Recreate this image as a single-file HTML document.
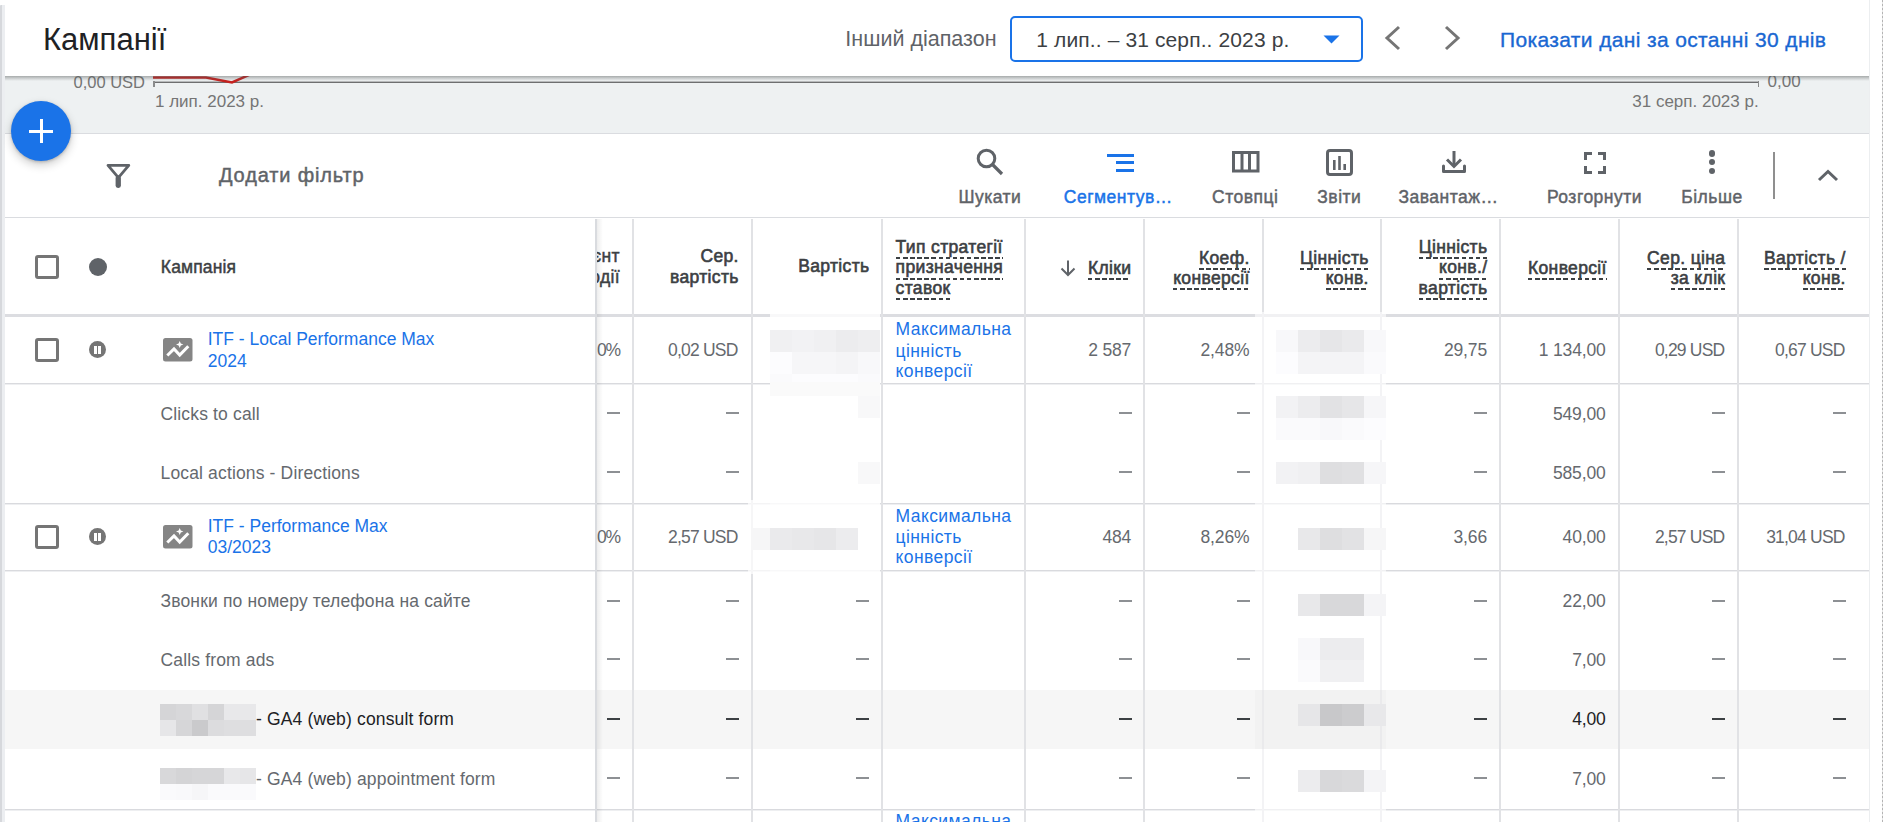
<!DOCTYPE html>
<html><head><meta charset="utf-8"><style>
html,body{margin:0;padding:0;}
body{width:1883px;height:822px;overflow:hidden;position:relative;background:#fff;font-family:"Liberation Sans",sans-serif;}
.t{position:absolute;white-space:nowrap;}
</style></head><body>
<div style="position:absolute;left:0px;top:5px;width:2px;height:817px;background:#d6d8dc;border-radius:1px 0 0 0"></div>
<div style="position:absolute;left:2px;top:5px;width:3px;height:817px;background:#eceef1"></div>
<div style="position:absolute;left:1869px;top:0px;width:1px;height:822px;background:#eceef0"></div>
<div style="position:absolute;left:1882px;top:0px;width:1px;height:822px;background:repeating-linear-gradient(#b4b4b4 0 2px,#e4e4e4 2px 4px)"></div>
<div style="position:absolute;left:5px;top:76px;width:1864px;height:57px;background:#eef1f2"></div>
<div style="position:absolute;left:153px;top:82px;width:1606px;height:1px;background:#6e6f70"></div>
<div style="position:absolute;left:153px;top:81px;width:1606px;height:1px;background:#b8babb"></div>
<div style="position:absolute;left:153px;top:81px;width:1.5px;height:6px;background:#8a8b8c"></div>
<div style="position:absolute;left:1757.5px;top:81px;width:1.5px;height:6px;background:#8a8b8c"></div>
<svg style="position:absolute;left:150px;top:70px" width="110" height="20"><polyline points="3,7.5 56,7.5 82,12.5 110,0" fill="none" stroke="#c5221f" stroke-width="2.5"/></svg>
<div class="t" style="left:-455.0px;width:600px;text-align:right;top:73.7px;font-size:16.5px;line-height:16.5px;color:#757575;">0,00 USD</div>
<div class="t" style="left:155.0px;top:93.0px;font-size:17px;line-height:17px;color:#757575;">1 лип. 2023 р.</div>
<div class="t" style="left:1767.5px;top:73.3px;font-size:17px;line-height:17px;color:#757575;">0,00</div>
<div class="t" style="left:1158.7px;width:600px;text-align:right;top:93.0px;font-size:17px;line-height:17px;color:#757575;">31 серп. 2023 р.</div>
<div style="position:absolute;left:5px;top:0px;width:1864px;height:76px;background:#fff"></div>
<div style="position:absolute;left:5px;top:76px;width:1864px;height:5px;background:linear-gradient(rgba(80,84,84,.45),rgba(80,84,84,.25) 40%,rgba(80,84,84,.08) 80%,rgba(80,84,84,0))"></div>
<div class="t" style="left:43.0px;top:23.8px;font-size:31px;line-height:31px;color:#202124;">Кампанії</div>
<div class="t" style="left:396.5px;width:600px;text-align:right;top:29.1px;font-size:21.5px;line-height:21.5px;color:#5f6368;">Інший діапазон</div>
<div style="position:absolute;left:1010px;top:16px;width:353px;height:46px;box-sizing:border-box;border:2.8px solid #1a73e8;border-radius:5px;background:#fff"></div>
<div class="t" style="left:1036.3px;top:29.1px;font-size:21px;line-height:21px;color:#3c4043;letter-spacing:0.12px">1 лип.. – 31 серп.. 2023 р.</div>
<svg style="position:absolute;left:1323px;top:35px" width="17" height="9"><polygon points="0.5,0.5 16.5,0.5 8.5,8.5" fill="#1a73e8"/></svg>
<svg style="position:absolute;left:1383px;top:25px" width="20" height="26"><polyline points="16,2 4,13 16,24" fill="none" stroke="#757575" stroke-width="3"/></svg>
<svg style="position:absolute;left:1442px;top:25px" width="20" height="26"><polyline points="4,2 16,13 4,24" fill="none" stroke="#757575" stroke-width="3"/></svg>
<div class="t" style="left:1500.0px;top:29.1px;font-size:21px;line-height:21px;color:#1967d2;letter-spacing:0.36px;-webkit-text-stroke:0.35px #1967d2">Показати дані за останні 30 днів</div>
<div style="position:absolute;left:5px;top:133px;width:1864px;height:85px;background:#fff;border-top:1px solid #dadce0;border-bottom:1px solid #dadce0;box-sizing:border-box"></div>
<svg style="position:absolute;left:106px;top:163px" width="25" height="26" viewBox="0 0 25 26"><path d="M2 2.4 H22.8 L12.4 14.6 Z" fill="none" stroke="#5f6368" stroke-width="2.8" stroke-linejoin="round"/><rect x="9.6" y="12.5" width="5.3" height="12.4" rx="2.4" fill="#5f6368"/></svg>
<div class="t" style="left:219.0px;top:165.3px;font-size:20px;line-height:20px;color:#5f6368;-webkit-text-stroke-width:0.45px;letter-spacing:0.3px;letter-spacing:0.85px">Додати фільтр</div>
<div class="t" style="left:689.9px;width:600px;text-align:center;top:188.5px;font-size:17.5px;line-height:17.5px;color:#5f6368;-webkit-text-stroke-width:0.45px;letter-spacing:0.3px;letter-spacing:0.5px">Шукати</div>
<div class="t" style="left:818.3px;width:600px;text-align:center;top:188.5px;font-size:17.5px;line-height:17.5px;color:#1a73e8;-webkit-text-stroke-width:0.45px;letter-spacing:0.3px;letter-spacing:0.5px">Сегментув…</div>
<div class="t" style="left:945.3px;width:600px;text-align:center;top:188.5px;font-size:17.5px;line-height:17.5px;color:#5f6368;-webkit-text-stroke-width:0.45px;letter-spacing:0.3px;letter-spacing:0.5px">Стовпці</div>
<div class="t" style="left:1039.3px;width:600px;text-align:center;top:188.5px;font-size:17.5px;line-height:17.5px;color:#5f6368;-webkit-text-stroke-width:0.45px;letter-spacing:0.3px;letter-spacing:0.5px">Звіти</div>
<div class="t" style="left:1148.5px;width:600px;text-align:center;top:188.5px;font-size:17.5px;line-height:17.5px;color:#5f6368;-webkit-text-stroke-width:0.45px;letter-spacing:0.3px;letter-spacing:0.5px">Завантаж…</div>
<div class="t" style="left:1294.5px;width:600px;text-align:center;top:188.5px;font-size:17.5px;line-height:17.5px;color:#5f6368;-webkit-text-stroke-width:0.45px;letter-spacing:0.3px;letter-spacing:0.5px">Розгорнути</div>
<div class="t" style="left:1412.0px;width:600px;text-align:center;top:188.5px;font-size:17.5px;line-height:17.5px;color:#5f6368;-webkit-text-stroke-width:0.45px;letter-spacing:0.3px;letter-spacing:0.5px">Більше</div>
<svg style="position:absolute;left:975px;top:147px" width="30" height="30"><circle cx="11.5" cy="11.5" r="8.3" fill="none" stroke="#5f6368" stroke-width="3"/><line x1="17.5" y1="17.5" x2="27" y2="27" stroke="#5f6368" stroke-width="3.2"/></svg>
<div style="position:absolute;left:1107px;top:153.5px;width:27px;height:3px;background:#1a73e8"></div>
<div style="position:absolute;left:1116px;top:161px;width:18px;height:3px;background:#1a73e8"></div>
<div style="position:absolute;left:1116px;top:168.5px;width:18px;height:3px;background:#1a73e8"></div>
<svg style="position:absolute;left:1232px;top:151px" width="28" height="22"><rect x="1.5" y="1.5" width="24.5" height="18.5" fill="none" stroke="#5f6368" stroke-width="3"/><line x1="10" y1="1" x2="10" y2="21" stroke="#5f6368" stroke-width="3"/><line x1="17.5" y1="1" x2="17.5" y2="21" stroke="#5f6368" stroke-width="3"/></svg>
<svg style="position:absolute;left:1326px;top:149px" width="28" height="28"><rect x="1.5" y="1.5" width="24" height="24" rx="2.5" fill="none" stroke="#5f6368" stroke-width="3"/><rect x="7" y="11" width="2.6" height="10" fill="#5f6368"/><rect x="12.2" y="7" width="2.6" height="14" fill="#5f6368"/><rect x="17.4" y="15" width="2.6" height="6" fill="#5f6368"/></svg>
<svg style="position:absolute;left:1441px;top:150px" width="26" height="26"><line x1="13" y1="1" x2="13" y2="16" stroke="#5f6368" stroke-width="3"/><polyline points="6,9.5 13,16.5 20,9.5" fill="none" stroke="#5f6368" stroke-width="3"/><path d="M2.5 16 V21.5 H23.5 V16" fill="none" stroke="#5f6368" stroke-width="3" stroke-linejoin="round" stroke-linecap="round"/></svg>
<svg style="position:absolute;left:1584px;top:152px" width="22" height="22"><path d="M1.5 8 V1.5 H8 M14 1.5 H20.5 V8 M20.5 14 V20.5 H14 M8 20.5 H1.5 V14" fill="none" stroke="#5f6368" stroke-width="3"/></svg>
<div style="position:absolute;left:1708.8px;top:150.3px;width:6.4px;height:6.4px;border-radius:50%;background:#5f6368"></div>
<div style="position:absolute;left:1708.8px;top:159.0px;width:6.4px;height:6.4px;border-radius:50%;background:#5f6368"></div>
<div style="position:absolute;left:1708.8px;top:167.8px;width:6.4px;height:6.4px;border-radius:50%;background:#5f6368"></div>
<div style="position:absolute;left:1773.2px;top:152px;width:1.4px;height:47px;background:#8f8f8f"></div>
<svg style="position:absolute;left:1816px;top:167px" width="24" height="16"><polyline points="3,13 12,4.5 21,13" fill="none" stroke="#5f6368" stroke-width="3"/></svg>
<div style="position:absolute;left:11px;top:101px;width:60px;height:60px;border-radius:50%;background:#1a73e8;box-shadow:0 4px 10px rgba(0,0,0,.2),0 1px 3px rgba(0,0,0,.2)"></div>
<div style="position:absolute;left:29px;top:129.5px;width:24px;height:3px;background:#fff"></div>
<div style="position:absolute;left:39.5px;top:119px;width:3px;height:24px;background:#fff"></div>
<div style="position:absolute;left:5px;top:219px;width:1864px;height:603px;background:#fff"></div>
<div style="position:absolute;left:5px;top:690px;width:1864px;height:59px;background:#f6f6f6"></div>
<div style="position:absolute;left:5px;top:314px;width:1864px;height:3px;background:#dcdde1"></div>
<div style="position:absolute;left:5px;top:383px;width:1864px;height:1px;background:#d9dade"></div>
<div style="position:absolute;left:5px;top:384px;width:1864px;height:1px;background:#eeeff1"></div>
<div style="position:absolute;left:5px;top:503px;width:1864px;height:1px;background:#d9dade"></div>
<div style="position:absolute;left:5px;top:504px;width:1864px;height:1px;background:#eeeff1"></div>
<div style="position:absolute;left:5px;top:570px;width:1864px;height:1px;background:#d9dade"></div>
<div style="position:absolute;left:5px;top:571px;width:1864px;height:1px;background:#eeeff1"></div>
<div style="position:absolute;left:5px;top:809px;width:1864px;height:1px;background:#d9dade"></div>
<div style="position:absolute;left:5px;top:810px;width:1864px;height:1px;background:#eeeff1"></div>
<div style="position:absolute;left:632px;top:219px;width:2px;height:603px;background:#e1e2e5"></div>
<div style="position:absolute;left:751px;top:219px;width:2px;height:603px;background:#e1e2e5"></div>
<div style="position:absolute;left:881px;top:219px;width:2px;height:603px;background:#e1e2e5"></div>
<div style="position:absolute;left:1024px;top:219px;width:2px;height:603px;background:#e1e2e5"></div>
<div style="position:absolute;left:1143px;top:219px;width:2px;height:603px;background:#e1e2e5"></div>
<div style="position:absolute;left:1262px;top:219px;width:2px;height:603px;background:#e1e2e5"></div>
<div style="position:absolute;left:1380px;top:219px;width:2px;height:603px;background:#e1e2e5"></div>
<div style="position:absolute;left:1499px;top:219px;width:2px;height:603px;background:#e1e2e5"></div>
<div style="position:absolute;left:1618px;top:219px;width:2px;height:603px;background:#e1e2e5"></div>
<div style="position:absolute;left:1737px;top:219px;width:2px;height:603px;background:#e1e2e5"></div>
<div style="position:absolute;left:770px;top:312px;width:110px;height:262px;background:rgba(255,255,255,.8)"></div>
<div style="position:absolute;left:748px;top:500px;width:22px;height:74px;background:rgba(255,255,255,.7)"></div>
<div style="position:absolute;left:1255px;top:312px;width:131px;height:510px;background:rgba(255,255,255,.6)"></div>
<div style="position:absolute;left:1255px;top:690px;width:131px;height:59px;background:rgba(0,0,0,.035)"></div>
<div class="t" style="left:19.8px;width:600px;text-align:right;top:247.9px;font-size:17.5px;line-height:17.5px;color:#3c4043;-webkit-text-stroke-width:0.45px;letter-spacing:0.3px;">Коефіцієнт</div>
<div class="t" style="left:19.8px;width:600px;text-align:right;top:268.8px;font-size:17.5px;line-height:17.5px;color:#3c4043;-webkit-text-stroke-width:0.45px;letter-spacing:0.3px;">взаємодії</div>
<div class="t" style="left:138.8px;width:600px;text-align:right;top:247.9px;font-size:17.5px;line-height:17.5px;color:#3c4043;-webkit-text-stroke-width:0.45px;letter-spacing:0.3px;-webkit-text-stroke-width:0.6px;letter-spacing:0.35px">Сер.</div>
<div class="t" style="left:138.8px;width:600px;text-align:right;top:268.8px;font-size:17.5px;line-height:17.5px;color:#3c4043;-webkit-text-stroke-width:0.45px;letter-spacing:0.3px;-webkit-text-stroke-width:0.6px;letter-spacing:0.35px">вартість</div>
<div class="t" style="left:269.5px;width:600px;text-align:right;top:258.4px;font-size:17.5px;line-height:17.5px;color:#3c4043;-webkit-text-stroke-width:0.45px;letter-spacing:0.3px;-webkit-text-stroke-width:0.6px;letter-spacing:0.35px">Вартість</div>
<div class="t" style="left:895.6px;top:238.8px;font-size:17.5px;line-height:17.5px;color:#3c4043;-webkit-text-stroke-width:0.45px;letter-spacing:0.3px;-webkit-text-stroke-width:0.6px;letter-spacing:0.35px"><span style="padding-bottom:2.3px;background-image:repeating-linear-gradient(90deg,#3c4043 0 4.5px,transparent 4.5px 7.1px);background-size:100% 2px;background-repeat:no-repeat;background-position:0 100%">Тип стратегії</span></div>
<div class="t" style="left:895.6px;top:259.4px;font-size:17.5px;line-height:17.5px;color:#3c4043;-webkit-text-stroke-width:0.45px;letter-spacing:0.3px;-webkit-text-stroke-width:0.6px;letter-spacing:0.35px"><span style="padding-bottom:2.3px;background-image:repeating-linear-gradient(90deg,#3c4043 0 4.5px,transparent 4.5px 7.1px);background-size:100% 2px;background-repeat:no-repeat;background-position:0 100%">призначення</span></div>
<div class="t" style="left:895.6px;top:279.8px;font-size:17.5px;line-height:17.5px;color:#3c4043;-webkit-text-stroke-width:0.45px;letter-spacing:0.3px;-webkit-text-stroke-width:0.6px;letter-spacing:0.35px"><span style="padding-bottom:2.3px;background-image:repeating-linear-gradient(90deg,#3c4043 0 4.5px,transparent 4.5px 7.1px);background-size:100% 2px;background-repeat:no-repeat;background-position:0 100%">ставок</span></div>
<div class="t" style="left:531.4px;width:600px;text-align:right;top:259.9px;font-size:17.5px;line-height:17.5px;color:#3c4043;-webkit-text-stroke-width:0.45px;letter-spacing:0.3px;-webkit-text-stroke-width:0.6px;letter-spacing:0.35px"><span style="padding-bottom:2.3px;background-image:repeating-linear-gradient(90deg,#3c4043 0 4.5px,transparent 4.5px 7.1px);background-size:100% 2px;background-repeat:no-repeat;background-position:0 100%">Кліки</span></div>
<svg style="position:absolute;left:1059px;top:259px" width="18" height="18"><line x1="9" y1="1.5" x2="9" y2="16" stroke="#5f6368" stroke-width="2"/><polyline points="2.5,9.5 9,16 15.5,9.5" fill="none" stroke="#5f6368" stroke-width="2"/></svg>
<div class="t" style="left:649.6px;width:600px;text-align:right;top:249.5px;font-size:17.5px;line-height:17.5px;color:#3c4043;-webkit-text-stroke-width:0.45px;letter-spacing:0.3px;-webkit-text-stroke-width:0.6px;letter-spacing:0.35px"><span style="padding-bottom:2.3px;background-image:repeating-linear-gradient(90deg,#3c4043 0 4.5px,transparent 4.5px 7.1px);background-size:100% 2px;background-repeat:no-repeat;background-position:0 100%">Коеф.</span></div>
<div class="t" style="left:649.6px;width:600px;text-align:right;top:270.1px;font-size:17.5px;line-height:17.5px;color:#3c4043;-webkit-text-stroke-width:0.45px;letter-spacing:0.3px;-webkit-text-stroke-width:0.6px;letter-spacing:0.35px"><span style="padding-bottom:2.3px;background-image:repeating-linear-gradient(90deg,#3c4043 0 4.5px,transparent 4.5px 7.1px);background-size:100% 2px;background-repeat:no-repeat;background-position:0 100%">конверсії</span></div>
<div class="t" style="left:768.8px;width:600px;text-align:right;top:249.5px;font-size:17.5px;line-height:17.5px;color:#3c4043;-webkit-text-stroke-width:0.45px;letter-spacing:0.3px;-webkit-text-stroke-width:0.6px;letter-spacing:0.35px"><span style="padding-bottom:2.3px;background-image:repeating-linear-gradient(90deg,#3c4043 0 4.5px,transparent 4.5px 7.1px);background-size:100% 2px;background-repeat:no-repeat;background-position:0 100%">Цінність</span></div>
<div class="t" style="left:768.8px;width:600px;text-align:right;top:270.1px;font-size:17.5px;line-height:17.5px;color:#3c4043;-webkit-text-stroke-width:0.45px;letter-spacing:0.3px;-webkit-text-stroke-width:0.6px;letter-spacing:0.35px"><span style="padding-bottom:2.3px;background-image:repeating-linear-gradient(90deg,#3c4043 0 4.5px,transparent 4.5px 7.1px);background-size:100% 2px;background-repeat:no-repeat;background-position:0 100%">конв.</span></div>
<div class="t" style="left:887.4px;width:600px;text-align:right;top:238.8px;font-size:17.5px;line-height:17.5px;color:#3c4043;-webkit-text-stroke-width:0.45px;letter-spacing:0.3px;-webkit-text-stroke-width:0.6px;letter-spacing:0.35px"><span style="padding-bottom:2.3px;background-image:repeating-linear-gradient(90deg,#3c4043 0 4.5px,transparent 4.5px 7.1px);background-size:100% 2px;background-repeat:no-repeat;background-position:0 100%">Цінність</span></div>
<div class="t" style="left:887.4px;width:600px;text-align:right;top:259.4px;font-size:17.5px;line-height:17.5px;color:#3c4043;-webkit-text-stroke-width:0.45px;letter-spacing:0.3px;-webkit-text-stroke-width:0.6px;letter-spacing:0.35px"><span style="padding-bottom:2.3px;background-image:repeating-linear-gradient(90deg,#3c4043 0 4.5px,transparent 4.5px 7.1px);background-size:100% 2px;background-repeat:no-repeat;background-position:0 100%">конв./</span></div>
<div class="t" style="left:887.4px;width:600px;text-align:right;top:280.0px;font-size:17.5px;line-height:17.5px;color:#3c4043;-webkit-text-stroke-width:0.45px;letter-spacing:0.3px;-webkit-text-stroke-width:0.6px;letter-spacing:0.35px"><span style="padding-bottom:2.3px;background-image:repeating-linear-gradient(90deg,#3c4043 0 4.5px,transparent 4.5px 7.1px);background-size:100% 2px;background-repeat:no-repeat;background-position:0 100%">вартість</span></div>
<div class="t" style="left:1006.8px;width:600px;text-align:right;top:259.8px;font-size:17.5px;line-height:17.5px;color:#3c4043;-webkit-text-stroke-width:0.45px;letter-spacing:0.3px;-webkit-text-stroke-width:0.6px;letter-spacing:0.35px"><span style="padding-bottom:2.3px;background-image:repeating-linear-gradient(90deg,#3c4043 0 4.5px,transparent 4.5px 7.1px);background-size:100% 2px;background-repeat:no-repeat;background-position:0 100%">Конверсії</span></div>
<div class="t" style="left:1125.4px;width:600px;text-align:right;top:249.5px;font-size:17.5px;line-height:17.5px;color:#3c4043;-webkit-text-stroke-width:0.45px;letter-spacing:0.3px;-webkit-text-stroke-width:0.6px;letter-spacing:0.35px"><span style="padding-bottom:2.3px;background-image:repeating-linear-gradient(90deg,#3c4043 0 4.5px,transparent 4.5px 7.1px);background-size:100% 2px;background-repeat:no-repeat;background-position:0 100%">Сер. ціна</span></div>
<div class="t" style="left:1125.4px;width:600px;text-align:right;top:270.1px;font-size:17.5px;line-height:17.5px;color:#3c4043;-webkit-text-stroke-width:0.45px;letter-spacing:0.3px;-webkit-text-stroke-width:0.6px;letter-spacing:0.35px"><span style="padding-bottom:2.3px;background-image:repeating-linear-gradient(90deg,#3c4043 0 4.5px,transparent 4.5px 7.1px);background-size:100% 2px;background-repeat:no-repeat;background-position:0 100%">за клік</span></div>
<div class="t" style="left:1245.8px;width:600px;text-align:right;top:249.5px;font-size:17.5px;line-height:17.5px;color:#3c4043;-webkit-text-stroke-width:0.45px;letter-spacing:0.3px;-webkit-text-stroke-width:0.6px;letter-spacing:0.35px"><span style="padding-bottom:2.3px;background-image:repeating-linear-gradient(90deg,#3c4043 0 4.5px,transparent 4.5px 7.1px);background-size:100% 2px;background-repeat:no-repeat;background-position:0 100%">Вартість /</span></div>
<div class="t" style="left:1245.8px;width:600px;text-align:right;top:270.1px;font-size:17.5px;line-height:17.5px;color:#3c4043;-webkit-text-stroke-width:0.45px;letter-spacing:0.3px;-webkit-text-stroke-width:0.6px;letter-spacing:0.35px"><span style="padding-bottom:2.3px;background-image:repeating-linear-gradient(90deg,#3c4043 0 4.5px,transparent 4.5px 7.1px);background-size:100% 2px;background-repeat:no-repeat;background-position:0 100%">конв.</span></div>
<div class="t" style="left:19.8px;width:600px;text-align:right;top:341.7px;font-size:17.5px;line-height:17.5px;color:#65696e;letter-spacing:-1.2px">0%</div>
<div class="t" style="left:19.8px;width:600px;text-align:right;top:528.7px;font-size:17.5px;line-height:17.5px;color:#65696e;letter-spacing:-1.2px">0%</div>
<div class="t" style="left:137.6px;width:600px;text-align:right;top:341.7px;font-size:17.5px;line-height:17.5px;color:#65696e;letter-spacing:-0.8px">0,02 USD</div>
<div class="t" style="left:531.2px;width:600px;text-align:right;top:341.7px;font-size:17.5px;line-height:17.5px;color:#65696e;letter-spacing:-0.15px">2 587</div>
<div class="t" style="left:649.4px;width:600px;text-align:right;top:341.7px;font-size:17.5px;line-height:17.5px;color:#65696e;letter-spacing:-0.15px">2,48%</div>
<div class="t" style="left:887.0px;width:600px;text-align:right;top:341.7px;font-size:17.5px;line-height:17.5px;color:#65696e;letter-spacing:-0.15px">29,75</div>
<div class="t" style="left:1005.6px;width:600px;text-align:right;top:341.7px;font-size:17.5px;line-height:17.5px;color:#65696e;letter-spacing:-0.15px">1 134,00</div>
<div class="t" style="left:1124.4px;width:600px;text-align:right;top:341.7px;font-size:17.5px;line-height:17.5px;color:#65696e;letter-spacing:-0.8px">0,29 USD</div>
<div class="t" style="left:1244.6px;width:600px;text-align:right;top:341.7px;font-size:17.5px;line-height:17.5px;color:#65696e;letter-spacing:-0.8px">0,67 USD</div>
<div class="t" style="left:895.6px;top:321.2px;font-size:17.5px;line-height:17.5px;color:#1a73e8;letter-spacing:0.4px">Максимальна</div>
<div class="t" style="left:895.6px;top:342.6px;font-size:17.5px;line-height:17.5px;color:#1a73e8;letter-spacing:0.4px">цінність</div>
<div class="t" style="left:895.6px;top:362.8px;font-size:17.5px;line-height:17.5px;color:#1a73e8;letter-spacing:0.4px">конверсії</div>
<div style="position:absolute;left:770px;top:330px;width:22px;height:22px;background:rgb(240,240,242)"></div>
<div style="position:absolute;left:792px;top:330px;width:22px;height:22px;background:rgb(242,242,244)"></div>
<div style="position:absolute;left:814px;top:330px;width:22px;height:22px;background:rgb(240,240,242)"></div>
<div style="position:absolute;left:836px;top:330px;width:22px;height:22px;background:rgb(236,236,238)"></div>
<div style="position:absolute;left:858px;top:330px;width:22px;height:22px;background:rgb(238,238,240)"></div>
<div style="position:absolute;left:770px;top:352px;width:22px;height:22px;background:rgb(252,252,254)"></div>
<div style="position:absolute;left:792px;top:352px;width:22px;height:22px;background:rgb(246,246,248)"></div>
<div style="position:absolute;left:814px;top:352px;width:22px;height:22px;background:rgb(246,246,248)"></div>
<div style="position:absolute;left:836px;top:352px;width:22px;height:22px;background:rgb(244,244,246)"></div>
<div style="position:absolute;left:858px;top:352px;width:22px;height:22px;background:rgb(248,248,250)"></div>
<div style="position:absolute;left:770px;top:374px;width:22px;height:22px;background:rgb(250,250,252)"></div>
<div style="position:absolute;left:792px;top:374px;width:22px;height:22px;background:rgb(252,252,254)"></div>
<div style="position:absolute;left:814px;top:374px;width:22px;height:22px;background:rgb(252,252,254)"></div>
<div style="position:absolute;left:836px;top:374px;width:22px;height:22px;background:rgb(252,252,254)"></div>
<div style="position:absolute;left:858px;top:374px;width:22px;height:22px;background:rgb(250,250,252)"></div>
<div style="position:absolute;left:770px;top:382px;width:110px;height:14px;background:#fafafa"></div>
<div style="position:absolute;left:858px;top:396px;width:22px;height:22px;background:#f8f8f9"></div>
<div style="position:absolute;left:858px;top:462px;width:22px;height:22px;background:#f8f8f9"></div>
<div style="position:absolute;left:1276px;top:330px;width:22px;height:22px;background:rgb(248,248,250)"></div>
<div style="position:absolute;left:1298px;top:330px;width:22px;height:22px;background:rgb(236,236,238)"></div>
<div style="position:absolute;left:1320px;top:330px;width:22px;height:22px;background:rgb(230,230,232)"></div>
<div style="position:absolute;left:1342px;top:330px;width:22px;height:22px;background:rgb(234,234,236)"></div>
<div style="position:absolute;left:1364px;top:330px;width:22px;height:22px;background:rgb(248,248,250)"></div>
<div style="position:absolute;left:1276px;top:352px;width:22px;height:22px;background:rgb(252,252,254)"></div>
<div style="position:absolute;left:1298px;top:352px;width:22px;height:22px;background:rgb(244,244,246)"></div>
<div style="position:absolute;left:1320px;top:352px;width:22px;height:22px;background:rgb(244,244,246)"></div>
<div style="position:absolute;left:1342px;top:352px;width:22px;height:22px;background:rgb(244,244,246)"></div>
<div style="position:absolute;left:1364px;top:352px;width:22px;height:22px;background:rgb(250,250,252)"></div>
<div style="position:absolute;left:726px;top:412px;width:13px;height:2px;background:#8d9094"></div>
<div style="position:absolute;left:1119px;top:412px;width:13px;height:2px;background:#8d9094"></div>
<div style="position:absolute;left:1237px;top:412px;width:13px;height:2px;background:#8d9094"></div>
<div style="position:absolute;left:1474px;top:412px;width:13px;height:2px;background:#8d9094"></div>
<div style="position:absolute;left:1712px;top:412px;width:13px;height:2px;background:#8d9094"></div>
<div style="position:absolute;left:1833px;top:412px;width:13px;height:2px;background:#8d9094"></div>
<div style="position:absolute;left:607px;top:412px;width:13px;height:2px;background:#8d9094"></div>
<div class="t" style="left:1005.6px;width:600px;text-align:right;top:405.9px;font-size:17.5px;line-height:17.5px;color:#65696e;letter-spacing:-0.15px">549,00</div>
<div style="position:absolute;left:726px;top:471px;width:13px;height:2px;background:#8d9094"></div>
<div style="position:absolute;left:1119px;top:471px;width:13px;height:2px;background:#8d9094"></div>
<div style="position:absolute;left:1237px;top:471px;width:13px;height:2px;background:#8d9094"></div>
<div style="position:absolute;left:1474px;top:471px;width:13px;height:2px;background:#8d9094"></div>
<div style="position:absolute;left:1712px;top:471px;width:13px;height:2px;background:#8d9094"></div>
<div style="position:absolute;left:1833px;top:471px;width:13px;height:2px;background:#8d9094"></div>
<div style="position:absolute;left:607px;top:471px;width:13px;height:2px;background:#8d9094"></div>
<div class="t" style="left:1005.6px;width:600px;text-align:right;top:465.0px;font-size:17.5px;line-height:17.5px;color:#65696e;letter-spacing:-0.15px">585,00</div>
<div style="position:absolute;left:1276px;top:396px;width:22px;height:22px;background:rgb(242,242,244)"></div>
<div style="position:absolute;left:1298px;top:396px;width:22px;height:22px;background:rgb(236,236,238)"></div>
<div style="position:absolute;left:1320px;top:396px;width:22px;height:22px;background:rgb(226,226,228)"></div>
<div style="position:absolute;left:1342px;top:396px;width:22px;height:22px;background:rgb(230,230,232)"></div>
<div style="position:absolute;left:1364px;top:396px;width:22px;height:22px;background:rgb(246,246,248)"></div>
<div style="position:absolute;left:1276px;top:418px;width:22px;height:22px;background:rgb(250,250,252)"></div>
<div style="position:absolute;left:1298px;top:418px;width:22px;height:22px;background:rgb(250,250,252)"></div>
<div style="position:absolute;left:1320px;top:418px;width:22px;height:22px;background:rgb(248,248,250)"></div>
<div style="position:absolute;left:1342px;top:418px;width:22px;height:22px;background:rgb(250,250,252)"></div>
<div style="position:absolute;left:1364px;top:418px;width:22px;height:22px;background:rgb(252,252,254)"></div>
<div style="position:absolute;left:1276px;top:462px;width:22px;height:22px;background:rgb(242,242,244)"></div>
<div style="position:absolute;left:1298px;top:462px;width:22px;height:22px;background:rgb(240,240,242)"></div>
<div style="position:absolute;left:1320px;top:462px;width:22px;height:22px;background:rgb(222,222,224)"></div>
<div style="position:absolute;left:1342px;top:462px;width:22px;height:22px;background:rgb(224,224,226)"></div>
<div style="position:absolute;left:1364px;top:462px;width:22px;height:22px;background:rgb(246,246,248)"></div>
<div class="t" style="left:137.6px;width:600px;text-align:right;top:528.7px;font-size:17.5px;line-height:17.5px;color:#65696e;letter-spacing:-0.8px">2,57 USD</div>
<div class="t" style="left:531.2px;width:600px;text-align:right;top:528.7px;font-size:17.5px;line-height:17.5px;color:#65696e;letter-spacing:-0.15px">484</div>
<div class="t" style="left:649.4px;width:600px;text-align:right;top:528.7px;font-size:17.5px;line-height:17.5px;color:#65696e;letter-spacing:-0.15px">8,26%</div>
<div class="t" style="left:887.0px;width:600px;text-align:right;top:528.7px;font-size:17.5px;line-height:17.5px;color:#65696e;letter-spacing:-0.15px">3,66</div>
<div class="t" style="left:1005.6px;width:600px;text-align:right;top:528.7px;font-size:17.5px;line-height:17.5px;color:#65696e;letter-spacing:-0.15px">40,00</div>
<div class="t" style="left:1124.4px;width:600px;text-align:right;top:528.7px;font-size:17.5px;line-height:17.5px;color:#65696e;letter-spacing:-0.8px">2,57 USD</div>
<div class="t" style="left:1244.6px;width:600px;text-align:right;top:528.7px;font-size:17.5px;line-height:17.5px;color:#65696e;letter-spacing:-0.8px">31,04 USD</div>
<div class="t" style="left:895.6px;top:508.2px;font-size:17.5px;line-height:17.5px;color:#1a73e8;letter-spacing:0.4px">Максимальна</div>
<div class="t" style="left:895.6px;top:529.4px;font-size:17.5px;line-height:17.5px;color:#1a73e8;letter-spacing:0.4px">цінність</div>
<div class="t" style="left:895.6px;top:549.4px;font-size:17.5px;line-height:17.5px;color:#1a73e8;letter-spacing:0.4px">конверсії</div>
<div style="position:absolute;left:770px;top:528px;width:22px;height:22px;background:rgb(234,234,236)"></div>
<div style="position:absolute;left:792px;top:528px;width:22px;height:22px;background:rgb(232,232,234)"></div>
<div style="position:absolute;left:814px;top:528px;width:22px;height:22px;background:rgb(230,230,232)"></div>
<div style="position:absolute;left:836px;top:528px;width:22px;height:22px;background:rgb(236,236,238)"></div>
<div style="position:absolute;left:752px;top:528px;width:18px;height:22px;background:#f6f6f7"></div>
<div style="position:absolute;left:1298px;top:528px;width:22px;height:22px;background:rgb(232,232,234)"></div>
<div style="position:absolute;left:1320px;top:528px;width:22px;height:22px;background:rgb(222,222,224)"></div>
<div style="position:absolute;left:1342px;top:528px;width:22px;height:22px;background:rgb(226,226,228)"></div>
<div style="position:absolute;left:1364px;top:528px;width:22px;height:22px;background:#f6f6f7"></div>
<div style="position:absolute;left:726px;top:600px;width:13px;height:2px;background:#8d9094"></div>
<div style="position:absolute;left:856px;top:600px;width:13px;height:2px;background:#8d9094"></div>
<div style="position:absolute;left:1119px;top:600px;width:13px;height:2px;background:#8d9094"></div>
<div style="position:absolute;left:1237px;top:600px;width:13px;height:2px;background:#8d9094"></div>
<div style="position:absolute;left:1474px;top:600px;width:13px;height:2px;background:#8d9094"></div>
<div style="position:absolute;left:1712px;top:600px;width:13px;height:2px;background:#8d9094"></div>
<div style="position:absolute;left:1833px;top:600px;width:13px;height:2px;background:#8d9094"></div>
<div style="position:absolute;left:607px;top:600px;width:13px;height:2px;background:#8d9094"></div>
<div class="t" style="left:1005.6px;width:600px;text-align:right;top:593.2px;font-size:17.5px;line-height:17.5px;color:#65696e;letter-spacing:-0.15px">22,00</div>
<div style="position:absolute;left:726px;top:658px;width:13px;height:2px;background:#8d9094"></div>
<div style="position:absolute;left:856px;top:658px;width:13px;height:2px;background:#8d9094"></div>
<div style="position:absolute;left:1119px;top:658px;width:13px;height:2px;background:#8d9094"></div>
<div style="position:absolute;left:1237px;top:658px;width:13px;height:2px;background:#8d9094"></div>
<div style="position:absolute;left:1474px;top:658px;width:13px;height:2px;background:#8d9094"></div>
<div style="position:absolute;left:1712px;top:658px;width:13px;height:2px;background:#8d9094"></div>
<div style="position:absolute;left:1833px;top:658px;width:13px;height:2px;background:#8d9094"></div>
<div style="position:absolute;left:607px;top:658px;width:13px;height:2px;background:#8d9094"></div>
<div class="t" style="left:1005.6px;width:600px;text-align:right;top:651.7px;font-size:17.5px;line-height:17.5px;color:#65696e;letter-spacing:-0.15px">7,00</div>
<div style="position:absolute;left:726px;top:718px;width:13px;height:2px;background:#3c4043"></div>
<div style="position:absolute;left:856px;top:718px;width:13px;height:2px;background:#3c4043"></div>
<div style="position:absolute;left:1119px;top:718px;width:13px;height:2px;background:#3c4043"></div>
<div style="position:absolute;left:1237px;top:718px;width:13px;height:2px;background:#3c4043"></div>
<div style="position:absolute;left:1474px;top:718px;width:13px;height:2px;background:#3c4043"></div>
<div style="position:absolute;left:1712px;top:718px;width:13px;height:2px;background:#3c4043"></div>
<div style="position:absolute;left:1833px;top:718px;width:13px;height:2px;background:#3c4043"></div>
<div style="position:absolute;left:607px;top:718px;width:13px;height:2px;background:#3c4043"></div>
<div class="t" style="left:1005.6px;width:600px;text-align:right;top:711.1px;font-size:17.5px;line-height:17.5px;color:#202124;letter-spacing:-0.15px">4,00</div>
<div style="position:absolute;left:726px;top:777px;width:13px;height:2px;background:#8d9094"></div>
<div style="position:absolute;left:856px;top:777px;width:13px;height:2px;background:#8d9094"></div>
<div style="position:absolute;left:1119px;top:777px;width:13px;height:2px;background:#8d9094"></div>
<div style="position:absolute;left:1237px;top:777px;width:13px;height:2px;background:#8d9094"></div>
<div style="position:absolute;left:1474px;top:777px;width:13px;height:2px;background:#8d9094"></div>
<div style="position:absolute;left:1712px;top:777px;width:13px;height:2px;background:#8d9094"></div>
<div style="position:absolute;left:1833px;top:777px;width:13px;height:2px;background:#8d9094"></div>
<div style="position:absolute;left:607px;top:777px;width:13px;height:2px;background:#8d9094"></div>
<div class="t" style="left:1005.6px;width:600px;text-align:right;top:770.8px;font-size:17.5px;line-height:17.5px;color:#65696e;letter-spacing:-0.15px">7,00</div>
<div style="position:absolute;left:1298px;top:594px;width:22px;height:22px;background:rgb(232,232,234)"></div>
<div style="position:absolute;left:1320px;top:594px;width:22px;height:22px;background:rgb(216,216,218)"></div>
<div style="position:absolute;left:1342px;top:594px;width:22px;height:22px;background:rgb(216,216,218)"></div>
<div style="position:absolute;left:1364px;top:594px;width:22px;height:22px;background:rgb(244,244,246)"></div>
<div style="position:absolute;left:1298px;top:638px;width:22px;height:22px;background:rgb(248,248,250)"></div>
<div style="position:absolute;left:1320px;top:638px;width:22px;height:22px;background:rgb(236,236,238)"></div>
<div style="position:absolute;left:1342px;top:638px;width:22px;height:22px;background:rgb(236,236,238)"></div>
<div style="position:absolute;left:1298px;top:660px;width:22px;height:22px;background:rgb(250,250,252)"></div>
<div style="position:absolute;left:1320px;top:660px;width:22px;height:22px;background:rgb(240,240,242)"></div>
<div style="position:absolute;left:1342px;top:660px;width:22px;height:22px;background:rgb(240,240,242)"></div>
<div style="position:absolute;left:1298px;top:704px;width:22px;height:22px;background:rgb(230,230,232)"></div>
<div style="position:absolute;left:1320px;top:704px;width:22px;height:22px;background:rgb(200,200,202)"></div>
<div style="position:absolute;left:1342px;top:704px;width:22px;height:22px;background:rgb(204,204,206)"></div>
<div style="position:absolute;left:1364px;top:704px;width:22px;height:22px;background:rgb(232,232,234)"></div>
<div style="position:absolute;left:1298px;top:770px;width:22px;height:22px;background:rgb(236,236,238)"></div>
<div style="position:absolute;left:1320px;top:770px;width:22px;height:22px;background:rgb(216,216,218)"></div>
<div style="position:absolute;left:1342px;top:770px;width:22px;height:22px;background:rgb(218,218,220)"></div>
<div style="position:absolute;left:1364px;top:770px;width:22px;height:22px;background:rgb(244,244,246)"></div>
<div class="t" style="left:895.6px;top:813.2px;font-size:17.5px;line-height:17.5px;color:#1a73e8;letter-spacing:0.4px">Максимальна</div>
<div style="position:absolute;left:5px;top:219px;width:591px;height:603px;background:#fff;overflow:hidden">
<div style="position:absolute;left:0px;top:471px;width:591px;height:59px;background:#f6f6f6"></div>
<div style="position:absolute;left:0px;top:95px;width:591px;height:3px;background:#dcdde1"></div>
<div style="position:absolute;left:0px;top:164px;width:591px;height:1px;background:#d9dade"></div>
<div style="position:absolute;left:0px;top:165px;width:591px;height:1px;background:#eeeff1"></div>
<div style="position:absolute;left:0px;top:284px;width:591px;height:1px;background:#d9dade"></div>
<div style="position:absolute;left:0px;top:285px;width:591px;height:1px;background:#eeeff1"></div>
<div style="position:absolute;left:0px;top:351px;width:591px;height:1px;background:#d9dade"></div>
<div style="position:absolute;left:0px;top:352px;width:591px;height:1px;background:#eeeff1"></div>
<div style="position:absolute;left:0px;top:590px;width:591px;height:1px;background:#d9dade"></div>
<div style="position:absolute;left:0px;top:591px;width:591px;height:1px;background:#eeeff1"></div>
<div style="position:absolute;left:30px;top:35.5px;width:24px;height:24px;box-sizing:border-box;border:3px solid #757575;border-radius:3px"></div>
<div style="position:absolute;left:30px;top:119px;width:24px;height:24px;box-sizing:border-box;border:3px solid #757575;border-radius:3px"></div>
<div style="position:absolute;left:30px;top:306px;width:24px;height:24px;box-sizing:border-box;border:3px solid #757575;border-radius:3px"></div>
<div style="position:absolute;left:83.5px;top:38.5px;width:18px;height:18px;border-radius:50%;background:#5f6368"></div>
<div class="t" style="left:155.8px;top:40.3px;font-size:17.5px;line-height:17.5px;color:#3c4043;-webkit-text-stroke-width:0.45px;letter-spacing:0.3px;letter-spacing:0.15px;">Кампанія</div>
<div style="position:absolute;left:83.6px;top:121.80000000000001px;width:17.6px;height:17.6px;border-radius:50%;background:#757575"></div>
<div style="position:absolute;left:89.3px;top:127px;width:2.5px;height:7.5px;background:#fff"></div>
<div style="position:absolute;left:93.1px;top:127px;width:2.5px;height:7.5px;background:#fff"></div>
<div style="position:absolute;left:83.6px;top:308.80000000000007px;width:17.6px;height:17.6px;border-radius:50%;background:#757575"></div>
<div style="position:absolute;left:89.3px;top:314px;width:2.5px;height:7.5px;background:#fff"></div>
<div style="position:absolute;left:93.1px;top:314px;width:2.5px;height:7.5px;background:#fff"></div>
<svg style="position:absolute;left:158px;top:119px" width="30" height="24" viewBox="0 0 30 24"><rect x="0" y="0" width="29.5" height="23.5" rx="2.5" fill="#858585"/><polyline points="4.3,17.5 11,11 16.7,17 25.3,8.3" fill="none" stroke="#fff" stroke-width="3"/><path d="M16.7 3 L17.8 5.6 L20.4 6.5 L17.8 7.4 L16.7 10 L15.6 7.4 L13 6.5 L15.6 5.6 Z" fill="#fff"/></svg>
<svg style="position:absolute;left:158px;top:306px" width="30" height="24" viewBox="0 0 30 24"><rect x="0" y="0" width="29.5" height="23.5" rx="2.5" fill="#858585"/><polyline points="4.3,17.5 11,11 16.7,17 25.3,8.3" fill="none" stroke="#fff" stroke-width="3"/><path d="M16.7 3 L17.8 5.6 L20.4 6.5 L17.8 7.4 L16.7 10 L15.6 7.4 L13 6.5 L15.6 5.6 Z" fill="#fff"/></svg>
<div class="t" style="left:202.7px;top:112.4px;font-size:17.5px;line-height:17.5px;color:#1a73e8;letter-spacing:0;">ITF - Local Performance Max</div>
<div class="t" style="left:202.7px;top:133.6px;font-size:17.5px;line-height:17.5px;color:#1a73e8;letter-spacing:0;">2024</div>
<div class="t" style="left:202.7px;top:298.7px;font-size:17.5px;line-height:17.5px;color:#1a73e8;letter-spacing:0;">ITF - Performance Max</div>
<div class="t" style="left:202.7px;top:320.0px;font-size:17.5px;line-height:17.5px;color:#1a73e8;letter-spacing:0;">03/2023</div>
<div class="t" style="left:155.5px;top:186.9px;font-size:17.5px;line-height:17.5px;color:#65696e;letter-spacing:0.15px;">Clicks to call</div>
<div class="t" style="left:155.5px;top:246.0px;font-size:17.5px;line-height:17.5px;color:#65696e;letter-spacing:0.15px;">Local actions - Directions</div>
<div class="t" style="left:155.5px;top:374.2px;font-size:17.5px;line-height:17.5px;color:#65696e;letter-spacing:0.15px;">Звонки по номеру телефона на сайте</div>
<div class="t" style="left:155.5px;top:432.7px;font-size:17.5px;line-height:17.5px;color:#65696e;letter-spacing:0.15px;">Calls from ads</div>
<div class="t" style="left:251.0px;top:492.1px;font-size:17.5px;line-height:17.5px;color:#202124;letter-spacing:0.15px;">- GA4 (web) consult form</div>
<div class="t" style="left:251.0px;top:551.8px;font-size:17.5px;line-height:17.5px;color:#65696e;letter-spacing:0.15px;">- GA4 (web) appointment form</div>
<div style="position:absolute;left:155px;top:485px;width:16px;height:16px;background:rgb(213,213,215)"></div>
<div style="position:absolute;left:171px;top:485px;width:16px;height:16px;background:rgb(216,216,218)"></div>
<div style="position:absolute;left:187px;top:485px;width:16px;height:16px;background:rgb(224,224,226)"></div>
<div style="position:absolute;left:203px;top:485px;width:16px;height:16px;background:rgb(213,213,215)"></div>
<div style="position:absolute;left:219px;top:485px;width:16px;height:16px;background:rgb(232,232,234)"></div>
<div style="position:absolute;left:235px;top:485px;width:16px;height:16px;background:rgb(232,232,234)"></div>
<div style="position:absolute;left:155px;top:501px;width:16px;height:16px;background:rgb(230,230,232)"></div>
<div style="position:absolute;left:171px;top:501px;width:16px;height:16px;background:rgb(214,214,216)"></div>
<div style="position:absolute;left:187px;top:501px;width:16px;height:16px;background:rgb(202,202,204)"></div>
<div style="position:absolute;left:203px;top:501px;width:16px;height:16px;background:rgb(220,220,222)"></div>
<div style="position:absolute;left:219px;top:501px;width:16px;height:16px;background:rgb(222,222,224)"></div>
<div style="position:absolute;left:235px;top:501px;width:16px;height:16px;background:rgb(222,222,224)"></div>
<div style="position:absolute;left:155px;top:549px;width:16px;height:16px;background:rgb(216,216,218)"></div>
<div style="position:absolute;left:171px;top:549px;width:16px;height:16px;background:rgb(212,212,214)"></div>
<div style="position:absolute;left:187px;top:549px;width:16px;height:16px;background:rgb(214,214,216)"></div>
<div style="position:absolute;left:203px;top:549px;width:16px;height:16px;background:rgb(214,214,216)"></div>
<div style="position:absolute;left:219px;top:549px;width:16px;height:16px;background:rgb(232,232,234)"></div>
<div style="position:absolute;left:235px;top:549px;width:16px;height:16px;background:rgb(230,230,232)"></div>
<div style="position:absolute;left:155px;top:565px;width:16px;height:16px;background:rgb(250,250,252)"></div>
<div style="position:absolute;left:171px;top:565px;width:16px;height:16px;background:rgb(249,249,251)"></div>
<div style="position:absolute;left:187px;top:565px;width:16px;height:16px;background:rgb(246,246,248)"></div>
<div style="position:absolute;left:203px;top:565px;width:16px;height:16px;background:rgb(250,250,252)"></div>
<div style="position:absolute;left:219px;top:565px;width:16px;height:16px;background:rgb(250,250,252)"></div>
<div style="position:absolute;left:235px;top:565px;width:16px;height:16px;background:rgb(250,250,252)"></div>
</div>
<div style="position:absolute;left:595px;top:219px;width:2px;height:603px;background:#d9dbdf"></div>
<div style="position:absolute;left:597px;top:219px;width:6px;height:603px;background:linear-gradient(90deg,rgba(0,0,0,.07),rgba(0,0,0,0))"></div>
</body></html>
